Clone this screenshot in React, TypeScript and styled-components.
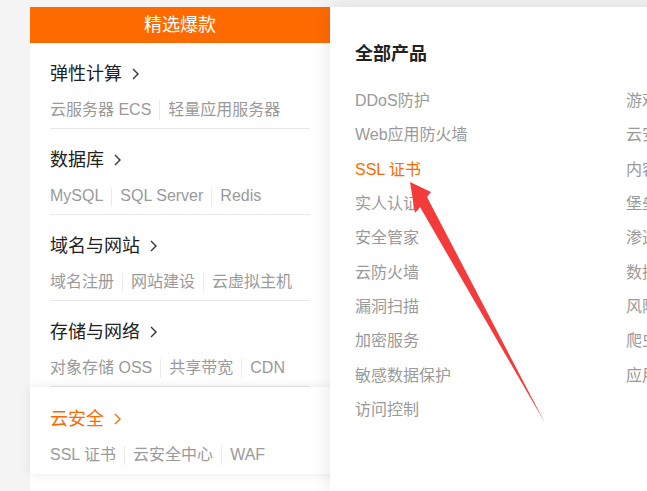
import React from "react";
import styled, { createGlobalStyle } from "styled-components";

const Global = createGlobalStyle`
  html, body { margin: 0; padding: 0; }
  body {
    width: 647px; height: 491px; overflow: hidden;
    background: #f4f4f4;
    font-family: "Liberation Sans", "Noto Sans CJK SC", sans-serif;
  }
`;

const Page = styled.div`
  position: relative;
  display: flex;
  width: 647px;
  height: 491px;
  padding: 7px 0 0 30px;
  box-sizing: border-box;
  overflow: hidden;
`;

const Sidebar = styled.aside`
  width: 300px;
  flex: none;
  background: #fff;
  display: flex;
  flex-direction: column;
  position: relative;
  z-index: 1;
`;

const Header = styled.div`
  height: 36px;
  background: #ff6a00;
  color: #fff;
  font-size: 18px;
  line-height: 36px;
  text-align: center;
`;

const Group = styled.div<{ $active?: boolean }>`
  position: relative;
  padding: 19px 20px 0;
  height: 86px;
  flex: none;
  box-sizing: border-box;
  background: #fff;
  ${(p) =>
    p.$active
      ? `
    z-index: 5;
    height: 87px;
    padding-top: 20px;
    width: 310px;
    box-shadow: 0 0 10px rgba(0,0,0,0.09);
    clip-path: inset(-14px 10px -14px -14px);
  `
      : ``}
`;

const Inner = styled.div<{ $last?: boolean }>`
  height: 67px;
  box-sizing: border-box;
  border-bottom: ${(p) => (p.$last ? "none" : "1px solid #e8e8e8")};
`;

const Title = styled.div<{ $active?: boolean }>`
  display: flex;
  align-items: center;
  height: 24px;
  font-size: 18px;
  line-height: 24px;
  color: ${(p) => (p.$active ? "#ff6a00" : "#222")};
`;

const Chevron = styled.svg`
  margin-left: 10px;
  width: 7px;
  height: 12px;
`;

const Subs = styled.div`
  display: flex;
  align-items: center;
  margin-top: 14px;
  height: 20px;
  font-size: 16px;
  line-height: 20px;
  color: #9a9a9a;
  white-space: nowrap;
`;

const Sep = styled.span`
  width: 1px;
  height: 19px;
  background: #ebebeb;
  margin: 0 8px;
`;

const Panel = styled.section`
  flex: 1;
  background: #fff;
  position: relative;
  z-index: 2;
  box-shadow: 0 0 18px rgba(0, 0, 0, 0.1);
  padding: 35px 0 0 25px;
  box-sizing: border-box;
`;

const PanelTitle = styled.div`
  font-size: 18px;
  font-weight: bold;
  line-height: 24px;
  height: 24px;
  color: #222;
`;

const Columns = styled.div`
  display: flex;
  margin-top: 18px;
`;

const Column = styled.div`
  width: 271px;
  flex: none;
  display: flex;
  flex-direction: column;
`;

const Item = styled.div<{ $hl?: boolean }>`
  height: 34.33px;
  line-height: 34.33px;
  font-size: 16px;
  color: ${(p) => (p.$hl ? "#ff6a00" : "#9a9a9a")};
  white-space: nowrap;
`;

const Arrow = styled.svg`
  position: absolute;
  left: 0;
  top: 0;
  width: 647px;
  height: 491px;
  pointer-events: none;
  z-index: 10;
`;

const groups = [
  { title: "弹性计算", subs: ["云服务器 ECS", "轻量应用服务器"] },
  { title: "数据库", subs: ["MySQL", "SQL Server", "Redis"] },
  { title: "域名与网站", subs: ["域名注册", "网站建设", "云虚拟主机"] },
  { title: "存储与网络", subs: ["对象存储 OSS", "共享带宽", "CDN"] },
  { title: "云安全", subs: ["SSL 证书", "云安全中心", "WAF"], active: true },
];

const col1 = [
  "DDoS防护",
  "Web应用防火墙",
  "SSL 证书",
  "实人认证",
  "安全管家",
  "云防火墙",
  "漏洞扫描",
  "加密服务",
  "敏感数据保护",
  "访问控制",
];
const col2 = [
  "游戏盾",
  "云安全中心",
  "内容安全",
  "堡垒机",
  "渗透测试",
  "数据库审计",
  "风险识别",
  "爬虫风险管理",
  "应用安全",
];

export default function App() {
  return (
    <>
      <Global />
      <Page>
        <Sidebar>
          <Header>精选爆款</Header>
          {groups.map((g) => (
            <Group key={g.title} $active={g.active}>
              <Inner $last={g.active}>
                <Title $active={g.active}>
                  {g.title}
                  <Chevron viewBox="0 0 7 12">
                    <polyline
                      points="1,1 6,6 1,11"
                      fill="none"
                      stroke={g.active ? "#ff6a00" : "#333"}
                      strokeWidth="1.4"
                    />
                  </Chevron>
                </Title>
                <Subs>
                  {g.subs.map((s, j) => (
                    <React.Fragment key={s}>
                      {j > 0 && <Sep />}
                      <span>{s}</span>
                    </React.Fragment>
                  ))}
                </Subs>
              </Inner>
            </Group>
          ))}
        </Sidebar>
        <Panel>
          <PanelTitle>全部产品</PanelTitle>
          <Columns>
            <Column>
              {col1.map((t) => (
                <Item key={t} $hl={t === "SSL 证书"}>
                  {t}
                </Item>
              ))}
            </Column>
            <Column>
              {col2.map((t) => (
                <Item key={t}>{t}</Item>
              ))}
            </Column>
          </Columns>
        </Panel>
        <Arrow viewBox="0 0 647 491">
          <polygon
            points="410,182 431,192 427,197 545,423 420,207 415,213"
            fill="#f43b3b"
          />
        </Arrow>
      </Page>
    </>
  );
}
